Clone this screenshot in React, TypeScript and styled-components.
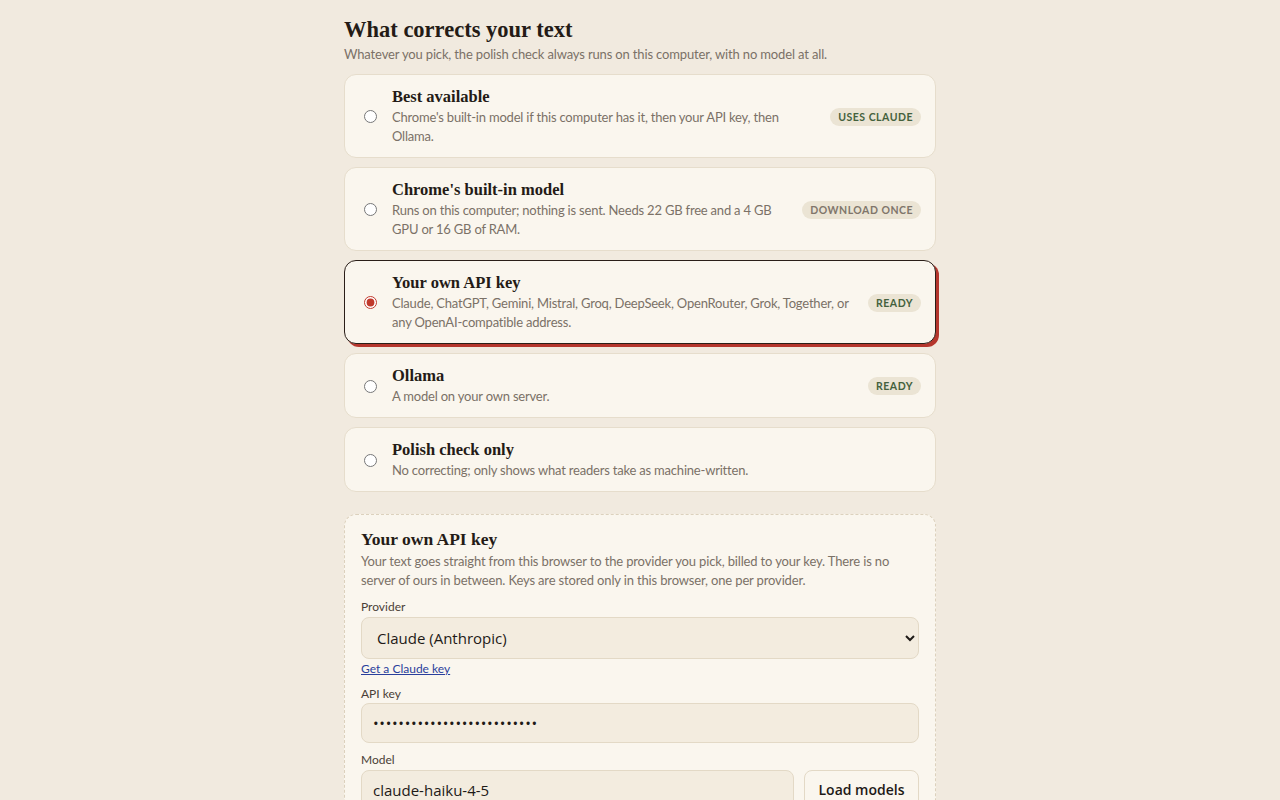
import React, { useState } from "react";
import styled, { createGlobalStyle } from "styled-components";

const Global = createGlobalStyle`
  html, body { margin: 0; padding: 0; }
  body {
    background: #f1eadf;
    font-family: "Lato", "Open Sans", sans-serif;
    color: #2a211c;
  }
`;

const Page = styled.main`
  width: 592px;
  margin: 0 auto;
  padding: 17px 0 40px;
  display: flex;
  flex-direction: column;
`;

const Title = styled.h2`
  margin: 0;
  font-family: "Liberation Serif", "DejaVu Serif", serif;
  font-weight: 700;
  font-size: 22.5px;
  line-height: 26px;
  color: #241b16;
`;

const Sub = styled.p`
  margin: 2px 0 0;
  font-size: 13px;
  line-height: 19px;
  letter-spacing: -0.15px;
  color: #7b7167;
`;

const Options = styled.div`
  margin-top: 10px;
  display: flex;
  flex-direction: column;
  gap: 9px;
`;

const Card = styled.label<{ $selected?: boolean }>`
  display: flex;
  align-items: center;
  gap: 15px;
  padding: 12px 14px 11px 19px;
  border-radius: 12px;
  background: #faf6ee;
  border: 1px solid ${(p) => (p.$selected ? "#2a1e18" : "#e6ddcc")};
  box-shadow: ${(p) => (p.$selected ? "3px 3px 0 #b5362d" : "none")};
  cursor: pointer;
`;

const Radio = styled.input`
  margin: 0;
  width: 13px;
  height: 13px;
  flex: none;
  accent-color: #c0392b;
`;

const Body = styled.div`
  flex: 1;
  min-width: 0;
  display: flex;
  flex-direction: column;
  gap: 1px;
`;

const CardTitle = styled.div`
  font-family: "Liberation Serif", "DejaVu Serif", serif;
  font-weight: 700;
  font-size: 16.5px;
  line-height: 20px;
  color: #241b16;
`;

const Desc = styled.div`
  font-size: 13px;
  line-height: 19px;
  letter-spacing: -0.2px;
  color: #7b7167;
`;

const Badge = styled.span<{ $tone: "green" | "gray" }>`
  flex: none;
  align-self: center;
  padding: 0 8px;
  height: 18px;
  display: inline-flex;
  align-items: center;
  border-radius: 9px;
  background: #ebe4d4;
  color: ${(p) => (p.$tone === "green" ? "#44613d" : "#80766b")};
  font-size: 10.5px;
  font-weight: 700;
  letter-spacing: 0.5px;
  text-transform: uppercase;
`;

const Panel = styled.section`
  margin-top: 22px;
  border: 1px dashed #dcd1bd;
  border-radius: 12px;
  background: #faf6ee;
  padding: 12px 16px 16px;
  display: flex;
  flex-direction: column;
`;

const PanelTitle = styled.h3`
  margin: 0;
  font-family: "Liberation Serif", "DejaVu Serif", serif;
  font-weight: 700;
  font-size: 17.5px;
  line-height: 24px;
  color: #241b16;
`;

const PanelDesc = styled.p`
  margin: 1px 0 0;
  font-size: 13px;
  line-height: 19px;
  letter-spacing: -0.15px;
  color: #7b7167;
`;

const Label = styled.div`
  margin-top: 8px;
  margin-bottom: 1.5px;
  font-size: 12px;
  line-height: 17px;
  color: #4a3f37;
`;

const Select = styled.select`
  height: 42px;
  width: 100%;
  border: 1px solid #e3d9c6;
  border-radius: 8px;
  background: #f3ecdf;
  padding: 0 11px;
  font-family: "Open Sans", "Noto Sans", sans-serif;
  font-size: 15px;
  color: #1e1a17;
`;

const Link = styled.a`
  margin-top: 1px;
  font-size: 12px;
  line-height: 17px;
  color: #2a3f9c;
  text-decoration: underline;
  align-self: flex-start;
`;

const Input = styled.input<{ $secret?: boolean }>`
  height: 40px;
  box-sizing: border-box;
  width: 100%;
  border: 1px solid #e3d9c6;
  border-radius: 8px;
  background: #f3ecdf;
  padding: 0 11px;
  font-family: "Open Sans", "Noto Sans", sans-serif;
  font-size: 15px;
  letter-spacing: ${(p) => (p.$secret ? "0.7px" : "normal")};
  color: #1e1a17;
`;

const Row = styled.div`
  display: flex;
  gap: 10px;
`;

const Button = styled.button`
  flex: none;
  width: 115px;
  height: 40px;
  border: 1px solid #e3d9c6;
  border-radius: 8px;
  background: #faf6ee;
  font-family: "Open Sans", "Noto Sans", sans-serif;
  font-weight: 600;
  font-size: 14px;
  color: #1e1a17;
`;

type Opt = {
  id: string;
  title: string;
  desc: string;
  badge?: string;
  tone?: "green" | "gray";
};

const options: Opt[] = [
  {
    id: "best",
    title: "Best available",
    desc: "Chrome's built-in model if this computer has it, then your API key, then Ollama.",
    badge: "Uses Claude",
    tone: "green",
  },
  {
    id: "chrome",
    title: "Chrome's built-in model",
    desc: "Runs on this computer; nothing is sent. Needs 22 GB free and a 4 GB GPU or 16 GB of RAM.",
    badge: "Download once",
    tone: "gray",
  },
  {
    id: "api",
    title: "Your own API key",
    desc: "Claude, ChatGPT, Gemini, Mistral, Groq, DeepSeek, OpenRouter, Grok, Together, or any OpenAI-compatible address.",
    badge: "Ready",
    tone: "green",
  },
  {
    id: "ollama",
    title: "Ollama",
    desc: "A model on your own server.",
    badge: "Ready",
    tone: "green",
  },
  {
    id: "polish",
    title: "Polish check only",
    desc: "No correcting; only shows what readers take as machine-written.",
  },
];

export default function App() {
  const [sel, setSel] = useState("api");
  return (
    <>
      <Global />
      <Page>
        <Title>What corrects your text</Title>
        <Sub>Whatever you pick, the polish check always runs on this computer, with no model at all.</Sub>
        <Options>
          {options.map((o) => (
            <Card key={o.id} $selected={sel === o.id}>
              <Radio type="radio" name="engine" checked={sel === o.id} onChange={() => setSel(o.id)} />
              <Body>
                <CardTitle>{o.title}</CardTitle>
                <Desc>{o.desc}</Desc>
              </Body>
              {o.badge && <Badge $tone={o.tone || "green"}>{o.badge}</Badge>}
            </Card>
          ))}
        </Options>
        <Panel>
          <PanelTitle>Your own API key</PanelTitle>
          <PanelDesc>
            Your text goes straight from this browser to the provider you pick, billed to your key. There is no
            server of ours in between. Keys are stored only in this browser, one per provider.
          </PanelDesc>
          <Label>Provider</Label>
          <Select defaultValue="claude">
            <option value="claude">Claude (Anthropic)</option>
            <option value="openai">ChatGPT (OpenAI)</option>
          </Select>
          <Link href="#">Get a Claude key</Link>
          <Label>API key</Label>
          <Input type="password" $secret defaultValue="sk-ant-abcdefghijklmnopqrs" />
          <Label>Model</Label>
          <Row>
            <Input type="text" defaultValue="claude-haiku-4-5" />
            <Button>Load models</Button>
          </Row>
        </Panel>
      </Page>
    </>
  );
}
